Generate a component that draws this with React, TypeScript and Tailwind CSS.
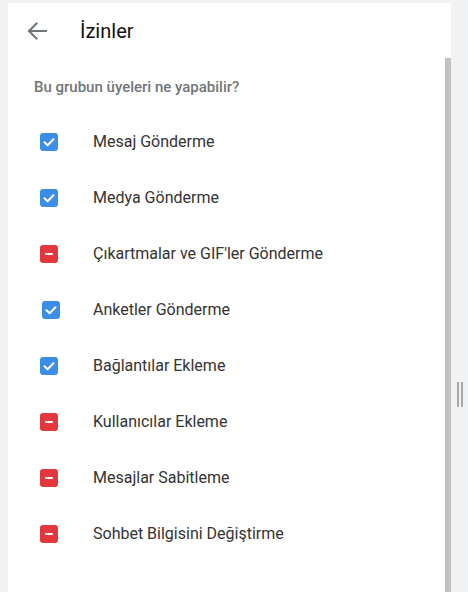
import React from "react";

type Item = { label: string; on: boolean; shift?: boolean };

const items: Item[] = [
  { label: "Mesaj Gönderme", on: true },
  { label: "Medya Gönderme", on: true },
  { label: "Çıkartmalar ve GIF'ler Gönderme", on: false },
  { label: "Anketler Gönderme", on: true, shift: true },
  { label: "Bağlantılar Ekleme", on: true },
  { label: "Kullanıcılar Ekleme", on: false },
  { label: "Mesajlar Sabitleme", on: false },
  { label: "Sohbet Bilgisini Değiştirme", on: false },
];

function Box({ on }: { on: boolean }) {
  if (on) {
    return (
      <div className="w-[18px] h-[18px] rounded-[3px] bg-[#3a8ee6] flex items-center justify-center">
        <svg width="14" height="14" viewBox="0 0 14 14">
          <path d="M2.5 7.2 L5.6 10.2 L11.5 4.2" fill="none" stroke="#fff" strokeWidth="2" strokeLinecap="round" strokeLinejoin="round" />
        </svg>
      </div>
    );
  }
  return (
    <div className="w-[18px] h-[18px] rounded-[3px] bg-[#e2383d] flex items-center justify-center">
      <div className="w-[8px] h-[2.5px] rounded-[1px] bg-white" />
    </div>
  );
}

export default function App() {
  return (
    <div
      className="w-[468px] h-[592px] flex flex-col bg-[#f1f2f4] overflow-hidden"
      style={{ fontFamily: "Roboto, 'Noto Sans', sans-serif" }}
    >
      <div className="h-[3px] shrink-0" />
      <div className="flex flex-1 min-h-0">
        <div className="w-[8px] shrink-0" />
        <div className="w-[437px] bg-white flex flex-col">
          <div className="h-[56px] flex items-center shrink-0">
            <svg className="ml-[18px]" width="22" height="22" viewBox="0 0 22 22">
              <path d="M20 11 H3 M10.5 3.5 L3 11 L10.5 18.5" fill="none" stroke="#707579" strokeWidth="2" strokeLinecap="square" />
            </svg>
            <span className="ml-[32px] text-[20px] font-normal text-[#111] leading-none">İzinler</span>
          </div>
          <div className="mt-[18px] h-[20px] flex items-center pl-[26px] text-[15px] font-medium text-[#707579]">
            Bu grubun üyeleri ne yapabilir?
          </div>
          <div className="mt-[17px] flex flex-col">
            {items.map((it) => (
              <div key={it.label} className="h-[56px] flex items-center pl-[32px]">
                <div className={it.shift ? "ml-[2px] mr-[33px]" : "mr-[35px]"}>
                  <Box on={it.on} />
                </div>
                <span className="text-[16px] font-normal text-[#333]">{it.label}</span>
              </div>
            ))}
          </div>
        </div>
        <div className="w-[6px] shrink-0 bg-white flex flex-col">
          <div className="h-[55px] bg-white shrink-0" />
          <div className="flex-1 bg-[#c1c1c1]" />
        </div>
        <div className="flex-1 flex flex-col items-center">
          <div className="mt-[379px] flex gap-[2px] ml-[1px]">
            <div className="w-[2px] h-[25px] bg-[#a9a9ab]" />
            <div className="w-[2px] h-[25px] bg-[#a9a9ab]" />
          </div>
        </div>
      </div>
    </div>
  );
}
